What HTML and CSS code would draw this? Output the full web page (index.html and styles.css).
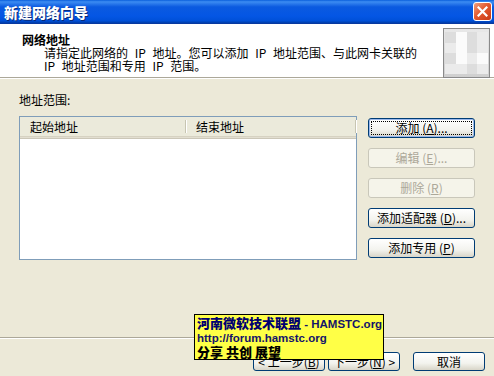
FILE: index.html
```html
<!DOCTYPE html>
<html>
<head>
  <meta charset="UTF-8">
  <link rel="stylesheet" href="styles.css">
</head>
<body>
  <div class="window">
    <div class="titlebar">
      <span class="title">新建网络向导</span>
      <span class="close-btn">
        <svg width="11" height="11" viewBox="0 0 11 11"><path d="M1.5 1.5 L9.5 9.5 M9.5 1.5 L1.5 9.5" stroke="#fff" stroke-width="2.2" stroke-linecap="square"/></svg>
      </span>
    </div>

    <div class="header">
      <div class="header-text">
        <div class="header-title">网络地址</div>
        <div class="header-desc">请指定此网络的 IP 地址。您可以添加 IP 地址范围、与此网卡关联的<br>IP 地址范围和专用 IP 范围。</div>
      </div>
      <div class="header-icon">
        <span></span><span class="w"></span><span></span><span class="l"></span>
        <span class="l"></span><span class="w"></span><span></span><span class="l"></span>
        <span></span><span class="w"></span><span class="l"></span><span class="w"></span>
        <span class="l"></span><span class="l"></span><span></span><span class="l"></span>
      </div>
    </div>

    <div class="content">
      <div class="section-label">地址范围:</div>
      <div class="range-row">
        <div class="listview">
          <div class="list-head">
            <div class="col col-start">起始地址</div>
            <div class="col col-end">结束地址</div>
          </div>
        </div>
        <div class="side-buttons">
          <button class="btn focused">添加 (<u>A</u>)...</button>
          <button class="btn" disabled>编辑 (<u>E</u>)...</button>
          <button class="btn" disabled>删除 (<u>R</u>)</button>
          <button class="btn">添加适配器 (<u>D</u>)...</button>
          <button class="btn">添加专用 (<u>P</u>)</button>
        </div>
      </div>
    </div>

    <div class="footer">
      <button class="btn nav">&lt; 上一步(<u>B</u>)</button>
      <button class="btn nav">下一步(<u>N</u>) &gt;</button>
      <button class="btn nav cancel">取消</button>
    </div>

    <div class="watermark">
      <div><b class="cn">河南微软技术联盟</b> - HAMSTC.org</div>
      <div>http://forum.hamstc.org</div>
      <div class="share">分享 共创 展望</div>
    </div>
  </div>
</body>
</html>
```

FILE: styles.css
```css
body {
  margin: 0;
  font-family: "Noto Sans CJK SC", "Liberation Sans", sans-serif;
  font-size: 12px;
  color: #000;
}
.window {
  position: relative;
  width: 494px;
  height: 376px;
  overflow: hidden;
  background-color: #ece9d8;
  display: flex;
  flex-direction: column;
}
.titlebar {
  height: 23px;
  display: flex;
  align-items: center;
  justify-content: space-between;
  padding: 0 2px 0 4px;
  background: linear-gradient(#0a5fdc, #3c8cf2 8%, #0b5ae0 30%, #0456e4 70%, #0050d8 90%, #003ca8);
  border-bottom: 1px solid #0838a0;
}
.title {
  color: #fff;
  font-weight: 900;
  font-size: 14px;
  line-height: 16px;
  text-shadow: 1px 1px 0 #0a2a78;
}
.close-btn {
  width: 17px;
  height: 17px;
  border: 1px solid #fff;
  border-radius: 3px;
  background: linear-gradient(135deg, #f0a080, #e45a30 45%, #c83a16);
  display: flex;
  align-items: center;
  justify-content: center;
}
.header {
  height: 54px;
  background-color: #fff;
  border-bottom: 1px solid #aca899;
  box-shadow: 0 1px 0 #fff;
  display: flex;
  padding: 0 4px 0 22px;
  box-sizing: border-box;
}
.header-text {
  flex: 1;
  padding-top: 9px;
}
.header-title {
  font-weight: bold;
  line-height: 13px;
}
.header-desc {
  margin-left: 22px;
  margin-top: 1px;
  line-height: 12.5px;
  word-spacing: 4px;
}
.header-icon {
  flex: none;
  width: 47px;
  height: 50px;
  margin-top: 4px;
  box-sizing: border-box;
  border: 1px solid #8a8a8a;
  background: linear-gradient(#e8e8e8, #cfcfcf);
  display: grid;
  grid-template-columns: repeat(4, 1fr);
  grid-template-rows: repeat(4, 1fr);
  padding: 3px 1px;
}
.header-icon span {
  background-color: #dddddd;
}
.header-icon span.l {
  background-color: #ebebeb;
}
.header-icon span.w {
  background-color: #fbfbfb;
}
.content {
  flex: 1;
  padding: 15px 0 0 19px;
}
.section-label {
  line-height: 14px;
  margin-bottom: 9px;
}
.range-row {
  display: flex;
  gap: 11px;
}
.listview {
  width: 338px;
  height: 144px;
  box-sizing: border-box;
  border: 1px solid #7f9db9;
  background-color: #fff;
}
.list-head {
  display: flex;
  height: 19px;
  background-color: #ebeadb;
  border-bottom: 1px solid #d6d2c2;
  box-shadow: 0 1px 0 #e2ded0, 0 2px 0 #cbc7b8;
}
.col {
  line-height: 19px;
  padding-left: 10px;
  position: relative;
}
.col:after {
  content: "";
  position: absolute;
  right: 0;
  top: 3px;
  bottom: 3px;
  width: 1px;
  background-color: #c7c5b2;
  box-shadow: 1px 0 0 #fff;
}
.col-start {
  width: 156px;
}
.col-end {
  flex: 1;
  padding-left: 10px;
}
.side-buttons {
  display: flex;
  flex-direction: column;
  gap: 10px;
  padding-top: 2px;
}
.btn {
  font-family: "Noto Sans CJK SC", "Liberation Sans", sans-serif;
  font-size: 12px;
  color: #000;
  height: 20px;
  width: 107px;
  padding: 0;
  border: 1px solid #003c74;
  border-radius: 3px;
  background: linear-gradient(#ffffff, #f3f3ee 60%, #d8d5c8);
  line-height: 16px;
  white-space: nowrap;
}
.btn u {
  text-underline-offset: 1px;
}
.btn.focused {
  box-shadow: inset 0 0 0 1px #9ab8ec;
  outline: 1px dotted #000;
  outline-offset: -4px;
}
.btn:disabled {
  color: #aca899;
  border-color: #c9c7ba;
  background: #f5f4ea;
}
.footer {
  height: 39px;
  box-sizing: border-box;
  border-top: 1px solid #aca899;
  box-shadow: inset 0 1px 0 #fff;
  display: flex;
  justify-content: flex-end;
  padding: 14px 9px 0 0;
  gap: 3px;
}
.btn.nav {
  width: 72px;
  height: 19px;
}
.btn.cancel {
  margin-left: 10px;
}
.watermark {
  position: absolute;
  left: 194px;
  top: 314px;
  width: 190px;
  height: 46px;
  box-sizing: border-box;
  border: 1px solid #000;
  background-color: #ffff46;
  padding: 1px 0 0 2px;
  font-family: "Liberation Sans", sans-serif;
  font-size: 11.5px;
  font-weight: bold;
  line-height: 14px;
  color: #14146a;
  white-space: nowrap;
}
.watermark .cn {
  font-family: "Noto Sans CJK SC", sans-serif;
  font-size: 13px;
  font-weight: 900;
  color: #000070;
}
.watermark .share {
  font-family: "Noto Sans CJK SC", sans-serif;
  font-size: 13px;
  font-weight: 900;
  color: #000;
}
```
